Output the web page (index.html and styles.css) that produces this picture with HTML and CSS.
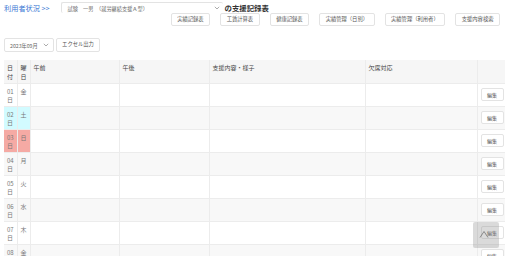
FILE: index.html
```html
<!DOCTYPE html>
<html lang="ja">
<head>
<meta charset="utf-8">
<link rel="stylesheet" href="styles.css">
</head>
<body>
<div class="page">
  <div class="titlebar">
    <span class="crumb">利用者状況 &gt;&gt;</span>
    <div class="fake-select user-select">
      <span>試験　一男　（就労継続支援Ａ型）</span>
      <svg class="chev" width="6" height="4" viewBox="0 0 6 4"><path d="M0.8 0.8 L3 3 L5.2 0.8" fill="none" stroke="#888" stroke-width="0.7"/></svg>
    </div>
    <span class="title">の支援記録表</span>
  </div>
  <div class="btnrow">
    <button class="btn">実績記録表</button>
    <button class="btn">工賃計算表</button>
    <button class="btn">健康記録表</button>
    <button class="btn">実績管理（日別）</button>
    <button class="btn">実績管理（利用者）</button>
    <button class="btn">支援内容検索</button>
  </div>
  <div class="controls">
    <div class="fake-select month-select">
      <span>2023年09月</span>
      <svg class="chev" width="6" height="4" viewBox="0 0 6 4"><path d="M0.8 0.8 L3 3 L5.2 0.8" fill="none" stroke="#888" stroke-width="0.7"/></svg>
    </div>
    <button class="btn excel">エクセル出力</button>
  </div>
  <table class="records">
    <colgroup>
      <col class="c-date"><col class="c-dow"><col class="c-am"><col class="c-pm"><col class="c-support"><col class="c-absent"><col class="c-edit">
    </colgroup>
    <thead>
      <tr><th>日付</th><th>曜日</th><th>午前</th><th>午後</th><th>支援内容・様子</th><th>欠席対応</th><th></th></tr>
    </thead>
    <tbody>
      <tr><td class="d">01日</td><td class="d">金</td><td></td><td></td><td></td><td></td><td class="e"><button class="edit">編集</button></td></tr>
      <tr class="sat"><td class="d">02日</td><td class="d">土</td><td></td><td></td><td></td><td></td><td class="e"><button class="edit">編集</button></td></tr>
      <tr class="sun"><td class="d">03日</td><td class="d">日</td><td></td><td></td><td></td><td></td><td class="e"><button class="edit">編集</button></td></tr>
      <tr><td class="d">04日</td><td class="d">月</td><td></td><td></td><td></td><td></td><td class="e"><button class="edit">編集</button></td></tr>
      <tr><td class="d">05日</td><td class="d">火</td><td></td><td></td><td></td><td></td><td class="e"><button class="edit">編集</button></td></tr>
      <tr><td class="d">06日</td><td class="d">水</td><td></td><td></td><td></td><td></td><td class="e"><button class="edit">編集</button></td></tr>
      <tr><td class="d">07日</td><td class="d">木</td><td></td><td></td><td></td><td></td><td class="e"><button class="edit">編集</button></td></tr>
      <tr><td class="d">08日</td><td class="d">金</td><td></td><td></td><td></td><td></td><td class="e"><button class="edit">編集</button></td></tr>
    </tbody>
  </table>
</div>
<div class="to-top">
  <svg width="12" height="8" viewBox="0 0 12 8"><path d="M1 7.5 L5 1.5 L9 7.5" fill="none" stroke="#666" stroke-width="0.7"/></svg>
</div>
</body>
</html>
```
FILE: styles.css
```css
* { box-sizing: border-box; }
html, body { margin: 0; padding: 0; background: #fff; overflow: hidden; }
body {
  font-family: "Noto Sans CJK JP", "Noto Sans", sans-serif;
  color: #555;
  width: 512px;
  height: 256px;
}
.page { padding: 2px 0 0 4px; }
.titlebar {
  display: flex;
  align-items: center;
  height: 11px;
}
.crumb {
  font-size: 7.2px;
  color: #3a78d4;
  margin-right: 11px;
  white-space: nowrap;
}
.fake-select {
  display: flex;
  align-items: center;
  justify-content: space-between;
  border: 1px solid #e3e3e3;
  border-radius: 2px;
  background: #fff;
  font-size: 5.2px;
  color: #666;
  white-space: nowrap;
}
.user-select {
  width: 162px;
  height: 11px;
  padding: 0 3px 0 6px;
  border-right: none;
  border-bottom: none;
}
.title {
  font-size: 7.4px;
  font-weight: bold;
  color: #333;
  margin-left: 2px;
  white-space: nowrap;
}
.btnrow {
  display: flex;
  justify-content: flex-end;
  gap: 10px;
  padding-right: 12px;
}
.btn {
  font-family: inherit;
  height: 13px;
  padding: 0 5.5px;
  font-size: 5.3px;
  color: #555;
  background: #fff;
  border: 1px solid #e3e3e3;
  border-radius: 2px;
  white-space: nowrap;
  line-height: 1;
}
.controls {
  display: flex;
  gap: 2px;
  margin-top: 12px;
}
.month-select {
  width: 50px;
  height: 14px;
  padding: 0 4px 0 5px;
}
.excel { height: 14px; width: 44px; padding: 0; }
.records {
  margin-top: 8px;
  width: 501px;
  border-collapse: collapse;
  table-layout: fixed;
  font-size: 6px;
}
.c-date { width: 13px; }
.c-dow { width: 13px; }
.c-am { width: 89px; }
.c-pm { width: 90px; }
.c-support { width: 156px; }
.c-absent { width: 112px; }
.c-edit { width: 28px; }
.records tr { height: 23px; }
.records th, .records td {
  border: 1px solid #ececec;
  vertical-align: top;
  text-align: left;
  padding: 4px 3px 0;
  line-height: 8.5px;
}
.records th {
  background: #f6f6f6;
  font-weight: normal;
  color: #444;
  border-top: none;
}
.records th:first-child, .records td:first-child { border-left: none; }
.records th:last-child, .records td:last-child { border-right: none; }
.records td.d { color: #777; }
.records tbody tr:nth-child(even) td { background: #f8f8f8; }
.records tr.sat td.d { background: #d2fbff; }
.records tr.sun td.d { background: #f5aaa4; }
.records td.e { padding: 4px 2px 0 3px; }
.edit {
  display: block;
  font-family: inherit;
  font-size: 5px;
  color: #555;
  background: #fff;
  border: 1px solid #e3e3e3;
  border-radius: 2px;
  width: 23px;
  height: 13px;
  padding: 0;
  line-height: 1;
}
.to-top {
  position: fixed;
  right: 13px;
  bottom: 8px;
  width: 26px;
  height: 26px;
  background: rgba(150,150,150,0.35);
  border-radius: 2px;
  padding: 8px 0 0 6px;
}
.to-top svg { display: block; }
```
